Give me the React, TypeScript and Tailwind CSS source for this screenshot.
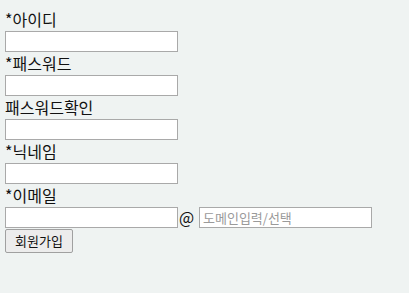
const fields = [
  { label: "*아이디", type: "text" },
  { label: "*패스워드", type: "password" },
  { label: "패스워드확인", type: "password" },
  { label: "*닉네임", type: "text" },
];

const font = { fontFamily: '"Noto Sans CJK KR", "Noto Sans", sans-serif' };

export default function App() {
  return (
    <div className="min-h-[293px] w-full bg-[#eff3f2] px-[5px] pt-[8px] text-[#111]" style={font}>
      <form className="flex flex-col items-start">
        {fields.map((f) => (
          <div key={f.label} className="flex flex-col">
            <label className="h-[23px] text-[16px] leading-[23px]">{f.label}</label>
            <input
              type={f.type}
              className="h-[21px] w-[173px] border border-[#a9a9a9] bg-white px-[3px] text-[13px] outline-none"
            />
          </div>
        ))}
        <div className="flex flex-col">
          <label className="h-[23px] text-[16px] leading-[23px]">*이메일</label>
          <div className="flex h-[21px] items-center">
            <input
              type="text"
              className="h-[21px] w-[173px] border border-[#a9a9a9] bg-white px-[3px] text-[13px] outline-none"
            />
            <span className="ml-[1px] w-[20px] text-[16px] leading-[21px]">@</span>
            <input
              type="text"
              placeholder="도메인입력/선택"
              className="h-[21px] w-[173px] border border-[#a9a9a9] bg-white px-[3px] text-[13px] outline-none placeholder:text-[#9a9a9a]"
            />
          </div>
        </div>
        <button
          type="button"
          className="mt-[1px] h-[24px] w-[68px] rounded-[2px] border border-[#a0a0a0] bg-[#ececec] text-[13px] leading-[22px] text-[#111]"
        >
          회원가입
        </button>
      </form>
    </div>
  );
}
